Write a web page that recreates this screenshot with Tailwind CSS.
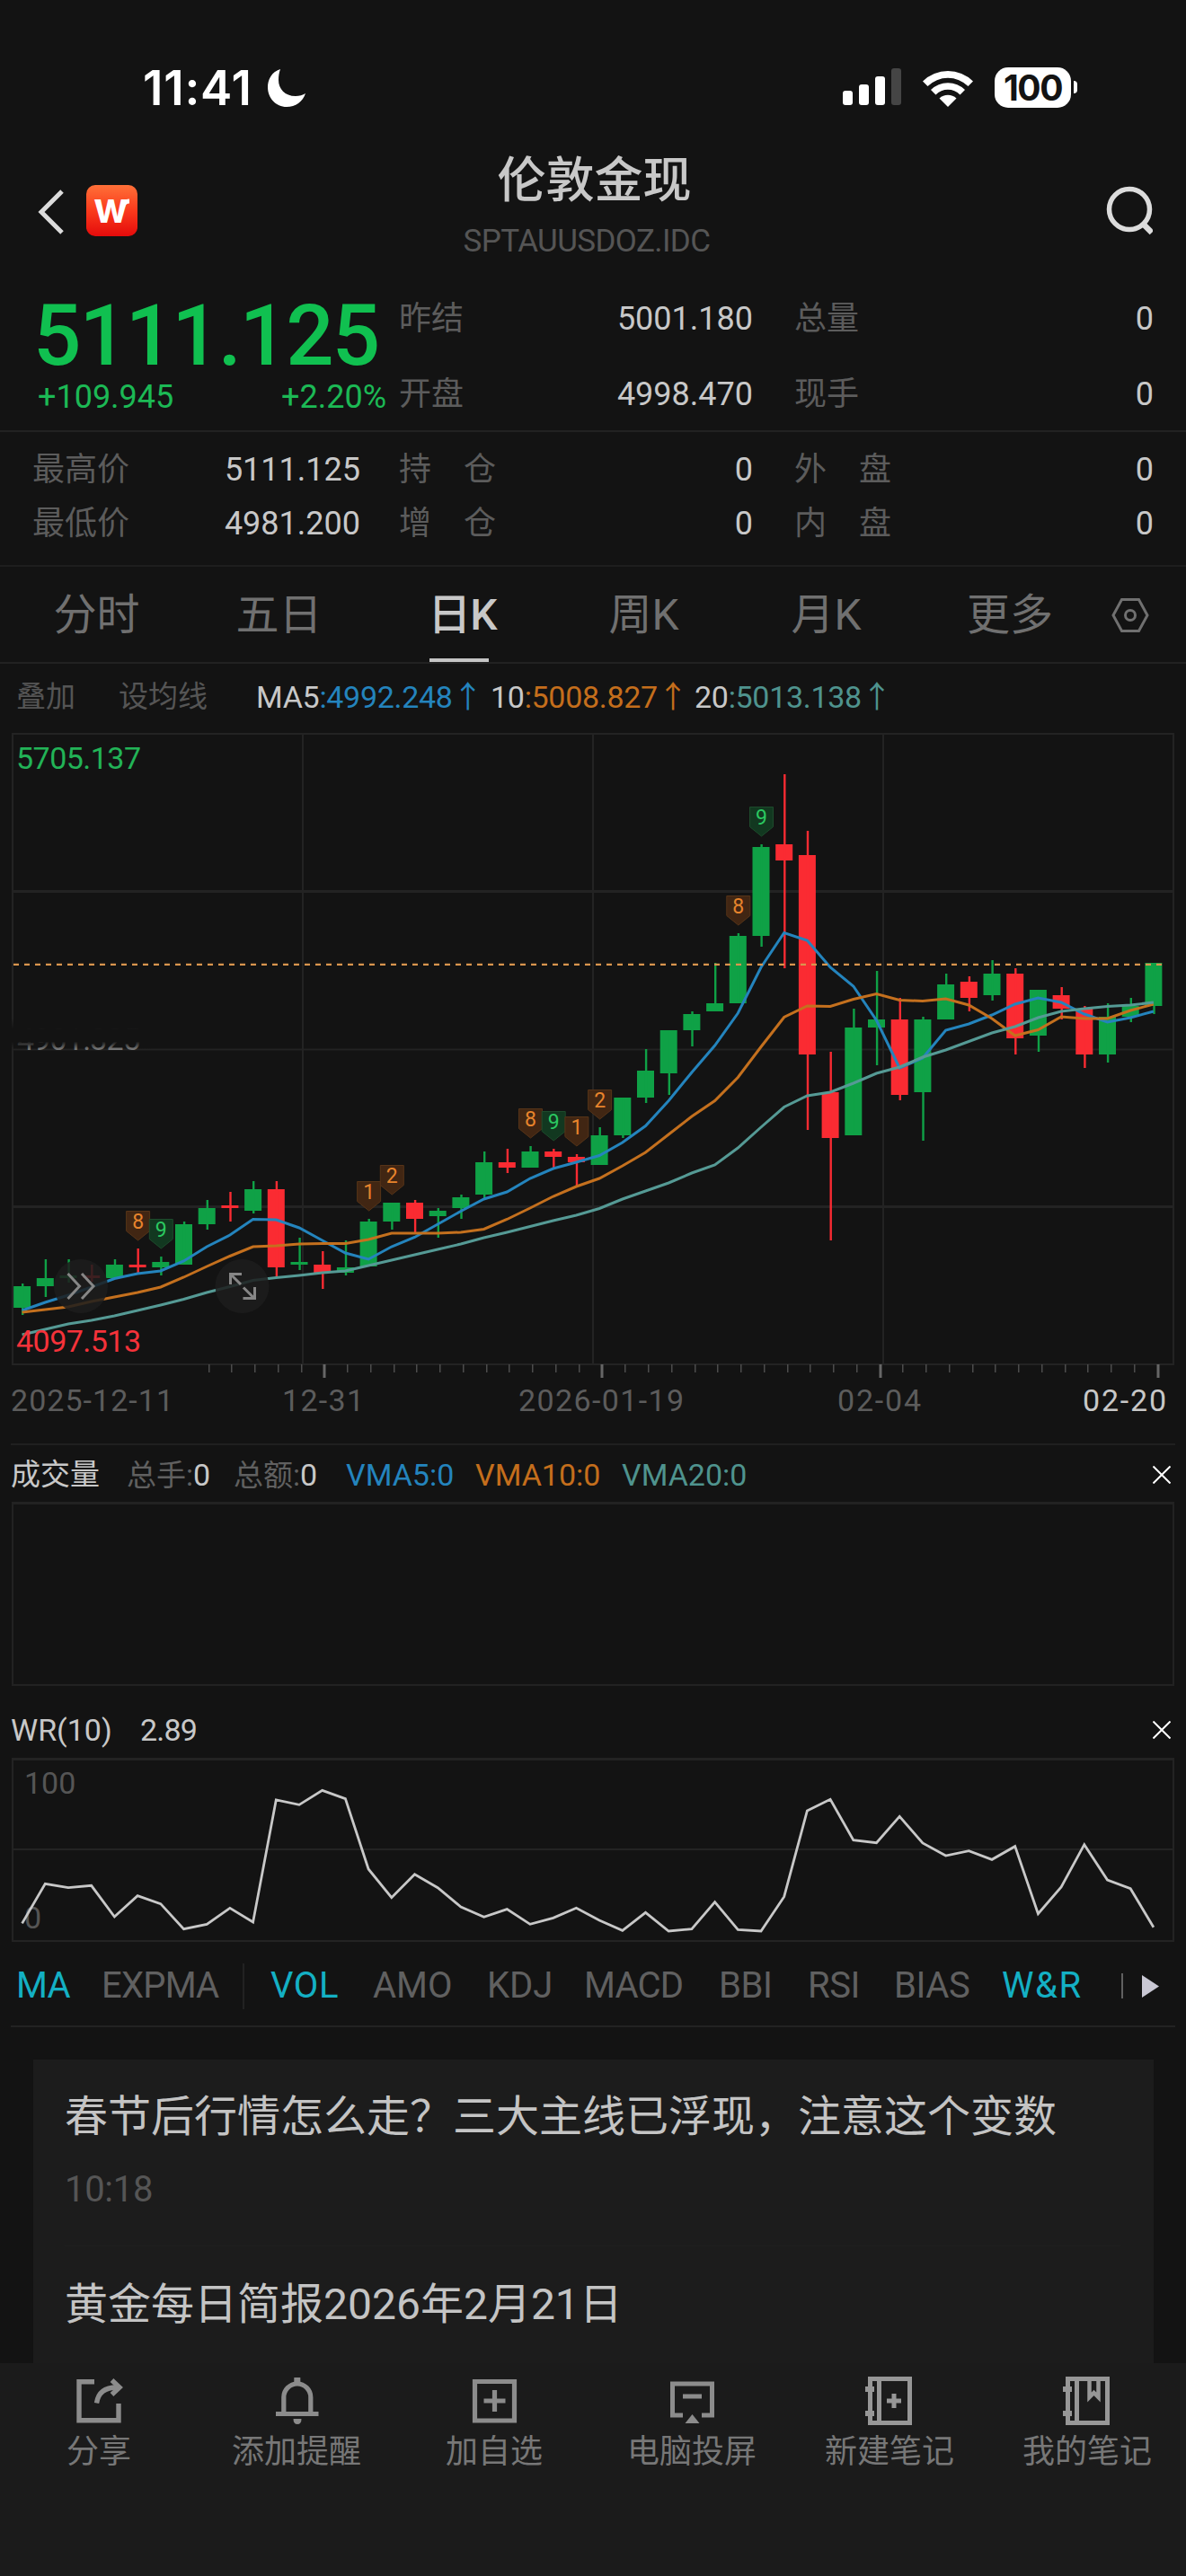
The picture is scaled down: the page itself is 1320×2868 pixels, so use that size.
<!DOCTYPE html>
<html lang="zh-CN">
<head>
    <meta charset="UTF-8">
    <meta name="viewport" content="width=device-width, initial-scale=1.0">
    <title>伦敦金现 SPTAUUSDOZ.IDC</title>
    <script src="https://cdn.jsdelivr.net/npm/@tailwindcss/browser@4"></script>
</head>
<body class="bg-[#131313]">
<div class="w-[1320px] h-[2868px] overflow-hidden flex flex-col bg-[#131313] text-[#c8c8c8] font-[Roboto,'Noto_Sans_CJK_SC',sans-serif] leading-none whitespace-nowrap">

    <!-- Status bar -->
    <div class="h-[150px] shrink-0 pt-[47px] pl-[159px] pr-[121px] flex items-start justify-between text-white">
        <div class="h-[102px] flex items-center">
            <span class="w-[138px] font-[Inter,sans-serif] font-semibold text-[53px] tracking-[0.8px]">11:41</span>
            <svg class="w-[44px] h-[44px]" viewBox="0 0 44 44"><path d="M15 1C5 4 1 13 1 21c0 12 9 22 21 22 10 0 18-6 21-15-3 2-7 3-11 3-12 0-19-8-19-18 0-4 .5-8 2-12Z" fill="#fff"/></svg>
        </div>
        <div class="h-[100px] flex items-center">
            <svg class="w-[66px] h-[42px] mr-[22px]" viewBox="0 0 66 42">
                <rect x="0" y="25" width="11" height="16" rx="3" fill="#fff"/>
                <rect x="18" y="18" width="11" height="23" rx="3" fill="#fff"/>
                <rect x="36" y="9" width="11" height="32" rx="3" fill="#fff"/>
                <rect x="54" y="0" width="11" height="41" rx="3" fill="#454545"/>
            </svg>
            <svg class="w-[58px] h-[43px] mr-[23px]" viewBox="0 0 58 43">
                <path d="M1 14.500 A40 40 0 0 1 57 14.500 L51.500 20 A32 32 0 0 0 6.500 20 Z" fill="#fff"/>
                <path d="M10 24 A27 27 0 0 1 48 24 L42.500 29.500 A19 19 0 0 0 15.500 29.500 Z" fill="#fff"/>
                <path d="M19.500 33.500 A14 14 0 0 1 38.500 33.500 L29 43 Z" fill="#fff"/>
            </svg>
            <div class="w-[85px] h-[45px] rounded-[15px] bg-white flex items-center justify-center text-[#131313] font-[Inter,sans-serif] font-bold text-[39px] tracking-[-1.5px]">100</div>
            <div class="w-[4px] h-[14px] ml-[3px] rounded-r-full bg-white"></div>
        </div>
    </div>

    <!-- Header -->
    <header class="h-[160px] shrink-0 px-[40px] flex items-start justify-between">
        <div class="w-[465px] pt-[56px] flex items-center">
            <svg class="w-[34px] h-[56px] mr-[22px]" viewBox="0 0 34 56"><path d="M29 6 6 29l23 23" fill="none" stroke="#dcdcdc" stroke-width="5"/></svg>
            <svg class="w-[57px] h-[57px]" viewBox="0 0 57 57">
                <defs><linearGradient id="logo" x1="0" y1="0" x2="0" y2="1"><stop offset="0" stop-color="#ff7038"/><stop offset=".5" stop-color="#fa3a1c"/><stop offset="1" stop-color="#e40b0b"/></linearGradient></defs>
                <rect width="57" height="57" rx="10" fill="url(#logo)"/>
                <text x="27.500" y="42" text-anchor="middle" textLength="38" lengthAdjust="spacingAndGlyphs" font-family="Inter" font-weight="700" font-size="48" fill="#fff">w</text>
                <path d="M41 20q2-4.500 7-4.500v5q-4 0-5 4z" fill="#fff"/>
            </svg>
        </div>
        <div class="w-[300px] pt-[24px] flex flex-col items-center">
            <h1 class="text-[54px] font-medium ml-[3px] pt-[1px]">伦敦金现</h1>
            <p class="mt-[22px] -ml-[14px] text-[35px] tracking-[-0.6px] text-[#555]">SPTAUUSDOZ.IDC</p>
        </div>
        <div class="w-[465px] pt-[55px] flex justify-end">
            <svg class="w-[56px] h-[62px] -mr-[3px]" viewBox="0 0 56 62"><circle cx="30" cy="28" r="22.500" fill="none" stroke="#dcdcdc" stroke-width="5.500"/><path d="m45 44 10 10" stroke="#dcdcdc" stroke-width="6.500"/></svg>
        </div>
    </header>

    <!-- Quote -->
    <section class="h-[171px] shrink-0 pl-[37px] grid grid-cols-[408px_439px_400px] border-b-2 border-[#222]">
        <div class="pt-[17px]">
            <div class="text-[94px] font-medium text-[#10c050] tracking-[-2px]">5111.125</div>
            <div class="mt-[3px] w-[393px] pl-[5px] flex justify-between text-[36px] text-[#1cb955]"><span>+109.945</span><span>+2.20%</span></div>
        </div>
        <div class="w-[393px] pt-[27px] flex flex-col gap-[48px] text-[36px]">
            <div class="flex justify-between"><span class="-ml-[1px] text-[#5c5c5c]">昨结</span><span>5001.180</span></div>
            <div class="flex justify-between"><span class="-ml-[1px] text-[#5c5c5c]">开盘</span><span>4998.470</span></div>
        </div>
        <div class="pt-[27px] flex flex-col gap-[48px] text-[36px]">
            <div class="flex justify-between"><span class="text-[#5c5c5c]">总量</span><span>0</span></div>
            <div class="flex justify-between"><span class="text-[#5c5c5c]">现手</span><span>0</span></div>
        </div>
    </section>
    <section class="h-[150px] shrink-0 pl-[37px] pt-[24px] grid grid-cols-[408px_439px_400px] grid-rows-[60px_60px] text-[36px] border-b-2 border-[#1e1e1e]">
        <div class="w-[364px] flex justify-between"><span class="-ml-[1px] text-[#5c5c5c]">最高价</span><span>5111.125</span></div>
        <div class="w-[393px] flex justify-between"><span class="-ml-[1px] text-[#5c5c5c]">持　仓</span><span>0</span></div>
        <div class="flex justify-between"><span class="text-[#5c5c5c]">外　盘</span><span>0</span></div>
        <div class="w-[364px] flex justify-between"><span class="-ml-[1px] text-[#5c5c5c]">最低价</span><span>4981.200</span></div>
        <div class="w-[393px] flex justify-between"><span class="-ml-[1px] text-[#5c5c5c]">增　仓</span><span>0</span></div>
        <div class="flex justify-between"><span class="text-[#5c5c5c]">内　盘</span><span>0</span></div>
    </section>

    <!-- Period tabs -->
    <nav class="h-[108px] shrink-0 pl-[6px] pt-[2px] flex items-center text-[48px] text-[#707070] border-b-2 border-[#222]">
        <div class="w-[203px] text-center">分时</div>
        <div class="w-[203px] text-center">五日</div>
        <div class="relative w-[203px] h-full pl-[2px] flex items-center justify-center text-[#c8c8c8] font-medium tracking-[-1px]">日K
            <div class="absolute left-[66px] bottom-0 w-[66px] h-[4px] bg-[#c4c4c4]"></div>
        </div>
        <div class="w-[203px] text-center">周K</div>
        <div class="w-[203px] text-center">月K</div>
        <div class="w-[203px] pl-[3px] text-center">更多</div>
        <svg class="ml-[13px] w-[42px] h-[40px]" viewBox="0 0 42 40" fill="none" stroke="#707070" stroke-width="3"><path d="M11.500 2.500h19L40 20l-9.500 17.500h-19L2 20Z"/><circle cx="21" cy="20" r="5.500"/></svg>
    </nav>

    <!-- MA legend -->
    <div class="h-[72px] shrink-0 pl-[18px] pt-[1px] flex items-center text-[34px]">
        <span class="w-[114px] text-[33px] text-[#555]">叠加</span>
        <span class="w-[153px] text-[33px] text-[#555]">设均线</span>
        <span class="w-[261px] tracking-[-0.3px]">MA5<span class="text-[#2484bd]">:4992.248↑</span></span>
        <span class="w-[227px] tracking-[-0.3px]">10<span class="text-[#c46e1c]">:5008.827↑</span></span>
        <span class="tracking-[-0.3px]">20<span class="text-[#4f938e]">:5013.138↑</span></span>
    </div>

    <!-- Candles, y axis of the viewBox starts at the top of this block -->
    <svg id="kline" class="w-[1320px] h-[796px] shrink-0" viewBox="0 811 1320 796" font-family="Roboto" font-size="34"></svg>

    <!-- Volume -->
    <section class="shrink-0 h-[270px] mx-[12px] border-t-2 border-[#202020]">
        <div class="h-[63px] pt-[2px] flex items-center text-[34px]">
            <span class="w-[129px] text-[33px]">成交量</span>
            <span class="w-[119px]"><span class="text-[33px] text-[#606060]">总手:</span>0</span>
            <span class="w-[125px]"><span class="text-[33px] text-[#606060]">总额:</span>0</span>
            <span class="w-[144px] text-[#2484bd]">VMA5:0</span>
            <span class="w-[163px] text-[#c46e1c]">VMA10:0</span>
            <span class="text-[#4f938e]">VMA20:0</span>
            <svg class="ml-auto mr-[5px] w-[20px] h-[20px]" viewBox="0 0 20 20"><path d="m.5.500 19 19m0-19-19 19" stroke="#fff" stroke-width="2"/></svg>
        </div>
        <div class="ml-[1px] mr-[1px] h-[205px] border-2 border-t-3 border-[#222]"></div>
    </section>

    <!-- Williams %R -->
    <section class="shrink-0 h-[286px] mx-[12px] pt-[17px]">
        <div class="h-[63px] flex items-center text-[34px]">
            <span class="w-[144px]">WR(10)</span>
            <span class="tracking-[-0.8px]">2.89</span>
            <svg class="ml-auto mr-[5px] w-[20px] h-[20px]" viewBox="0 0 20 20"><path d="m.5.500 19 19m0-19-19 19" stroke="#fff" stroke-width="2"/></svg>
        </div>
        <svg id="wr" class="w-[1296px] h-[205px]" viewBox="12 1957 1296 205" font-family="Roboto" font-size="34"></svg>
    </section>

    <!-- Indicator picker -->
    <div class="h-[94px] shrink-0 mx-[12px] pl-[6px] pt-[4px] flex items-center text-[40px] text-[#606060] border-b-2 border-[#222]">
        <span class="w-[95px] tracking-[-0.8px] text-[#14b0c4]">MA</span>
        <span class="w-[157px] tracking-[-0.8px]">EXPMA</span>
        <span class="w-[2px] h-[51px] mr-[29px] bg-[#222]"></span>
        <span class="w-[114px] tracking-[0.6px] text-[#14b0c4]">VOL</span>
        <span class="w-[127px]">AMO</span>
        <span class="w-[108px]">KDJ</span>
        <span class="w-[150px] tracking-[-0.8px]">MACD</span>
        <span class="w-[99px] tracking-[-0.4px]">BBI</span>
        <span class="w-[96px] tracking-[-0.4px]">RSI</span>
        <span class="w-[120px] tracking-[-0.4px]">BIAS</span>
        <span class="w-[133px] tracking-[1.6px] text-[#14b0c4]">W&amp;R</span>
        <span class="w-[2px] h-[28px] mr-[21px] bg-[#606060]"></span>
        <svg class="w-[20px] h-[25px]" viewBox="0 0 20 25"><path d="M0 0 19 12.500 0 25Z" fill="#c9c8d4"/></svg>
    </div>

    <!-- News -->
    <div class="h-[374px] shrink-0 pt-[36px] pl-[37px] pr-[36px]">
        <div class="h-[338px] pl-[35px] pr-[37px] bg-[#1c1c1c] text-[48px] text-[#c4c4c4]">
            <div class="h-[208px] pt-[40px] border-b border-[#1f1f1f]">
                <p>春节后行情怎么走？三大主线已浮现，注意这个变数</p>
                <p class="mt-[37px] text-[40px] tracking-[-0.3px] text-[#555]">10:18</p>
            </div>
            <p class="pt-[41px]">黄金每日简报2026年2月21日</p>
        </div>
    </div>

    <!-- Bottom toolbar -->
    <footer class="h-[237px] shrink-0 pt-[12px] grid grid-cols-6 bg-[#1b1b1b] text-[36px] text-[#777] text-center">
        <div><svg class="mx-auto mb-[9px] w-[60px] h-[60px]" viewBox="0 0 60 60" fill="none" stroke="#8c8c8c" stroke-width="5.400"><path d="M25 8.800H8v43h44V33"/><path d="M27.500 32.500Q30 15 50 15"/><path d="m44.500 7 8.500 8-8.500 8"/></svg>分享</div>
        <div><svg class="mx-auto mb-[9px] w-[60px] h-[60px]" viewBox="0 0 60 60" fill="none" stroke="#8c8c8c" stroke-width="5.200"><path d="M15.800 44V26a15 15 0 0 1 30 0v18M7 44.500h47.500"/><path d="M30.800 4v6" stroke-width="7"/><path d="M26.500 50h9q0 6-4.500 6t-4.500-6Z" fill="#8c8c8c" stroke="none"/></svg>添加提醒</div>
        <div><svg class="mx-auto mb-[9px] w-[60px] h-[60px]" viewBox="0 0 60 60" fill="none" stroke="#8c8c8c" stroke-width="5.200"><path d="M8.500 8.500h44v43.500h-44ZM18.500 30h24M30.500 18v24"/></svg>加自选</div>
        <div><svg class="mx-auto mb-[9px] w-[60px] h-[60px]" viewBox="0 0 60 60" fill="none" stroke="#8c8c8c" stroke-width="5"><path d="M20 46H8.500V11h44v35H41M20 25h21"/><path d="m30.500 45 8 10h-16Z" fill="#8c8c8c" stroke="none"/></svg>电脑投屏</div>
        <div><svg class="mx-auto mb-[9px] w-[60px] h-[60px]" viewBox="0 0 60 60" fill="none" stroke="#979797" stroke-width="5"><path d="M8.500 5.500h44v49h-44ZM18.500 5v50"/><path d="M3 17h10M3 44h10" stroke-width="6"/><path d="M27 30h16M35 22v16"/></svg>新建笔记</div>
        <div><svg class="mx-auto mb-[9px] w-[60px] h-[60px]" viewBox="0 0 60 60" fill="none" stroke="#979797" stroke-width="5"><path d="M8.500 5.500h44v49h-44ZM18.500 5v50"/><path d="M3 17h10M3 44h10" stroke-width="6"/><path d="M32.500 6v20l5-5 5 5V6" stroke-width="4.500"/></svg>我的笔记</div>
    </footer>
</div>

<script>
    const STEP = 25.7;
    const UP = '#0fa146';
    const DOWN = '#fa2b32';
    const cx = i => 24.6 + i * STEP;

    // [up, high, bodyTop, bodyBottom, low]
    const candles = [
        [1,1429,1432,1456,1464],[1,1402,1423,1432,1444],[1,1402,1420,1423,1428],[0,1408,1420,1423,1427],[1,1402,1408,1423,1423],
        [0,1390,1408,1411,1417],[1,1399,1405,1411,1420],[1,1360,1363,1408,1408],[1,1336,1345,1363,1369],[0,1327,1342,1345,1360],
        [1,1315,1324,1348,1351],[0,1315,1324,1411,1422],[1,1378,1405,1408,1414],[0,1393,1408,1417,1435],[1,1381,1411,1417,1420],
        [1,1357,1360,1410,1410],[1,1339,1339,1360,1369],[0,1336,1339,1357,1372],[1,1345,1348,1354,1378],[1,1330,1333,1345,1357],
        [1,1282,1294,1330,1335],[0,1279,1294,1300,1306],[1,1276,1282,1300,1300],[0,1279,1282,1288,1300],[0,1285,1288,1294,1321],
        [1,1255,1264,1297,1297],[1,1222,1222,1264,1267],[1,1168,1192,1222,1228],[1,1147,1147,1195,1219],[1,1126,1129,1147,1165],
        [1,1072,1117,1126,1126],[1,1039,1042,1117,1117],[1,940,943,1042,1054],[0,862,940,958,1078],[0,925,952,1174,1258],
        [0,1171,1216,1267,1381],[1,1123,1144,1264,1264],[1,1081,1135,1144,1186],[0,1111,1135,1219,1225],[1,1132,1135,1216,1270],
        [1,1084,1096,1135,1135],[0,1087,1093,1111,1126],[1,1069,1084,1108,1114],[0,1078,1084,1156,1174],[1,1102,1102,1153,1171],
        [0,1099,1108,1123,1135],[0,1120,1123,1174,1189],[1,1117,1132,1174,1183],[1,1111,1120,1132,1138],[1,1072,1072,1120,1129]
    ];
    const ma5 = [1459,1450,1442,1433,1423.5,1418,1415,1404,1388,1375,1357.5,1358,1367,1381,1395,1402,1388,1377.5,1363,1348.5,1335,1327,1312,1301,1294,1286.5,1272,1253.5,1225.5,1194,1164,1128,1077,1038.5,1047,1077,1098,1136,1189,1178,1147,1140,1130,1118,1111,1116,1129,1138,1133,1126];
    const ma10 = [1461,1458,1455,1449,1444,1439,1433,1422,1410,1398.5,1388,1387,1385,1384.5,1384.5,1380,1373,1373,1373,1372,1368.5,1357.5,1345,1332,1321,1312,1298,1283,1263,1243,1225.5,1199.5,1165.5,1132.5,1120,1120.5,1112.5,1106.5,1113.5,1114.5,1112,1119,1134,1153,1146.5,1132,1134,1134,1125,1118];
    const ma20 = [1486,1480,1474,1470,1465,1459,1453,1446.5,1439,1432.5,1425.5,1422.5,1420,1417,1415,1409,1403,1397,1391,1385,1378,1372,1365.5,1359,1353,1345.5,1335,1326,1317,1306,1297,1278,1255,1232.5,1220,1216,1206,1195,1188,1177,1169,1159.5,1150,1143,1133,1126,1123,1120.5,1119,1116];
    // candle index -> TD count
    const marks = { 5: 8, 6: 9, 15: 1, 16: 2, 22: 8, 23: 9, 24: 1, 25: 2, 31: 8, 32: 9 };

    const line = (data, color, w) =>
        `<polyline points="${data.map((y, i) => cx(i).toFixed(1) + ',' + y).join(' ')}" fill="none" stroke="${color}" stroke-width="${w}"/>`;

    let s = '<defs><linearGradient id="fade" x1="0" y1="0" x2="0" y2="1"><stop offset="0" stop-color="#131313" stop-opacity="0"/><stop offset=".35" stop-color="#131313"/><stop offset=".75" stop-color="#131313"/><stop offset="1" stop-color="#131313" stop-opacity="0"/></linearGradient></defs>';

    // grid
    s += '<g fill="none" stroke="#232323" stroke-width="2"><path d="M14 817H1306V1519H14Z"/><path d="M14 1168.500H1306"/><path d="M14 992.500H1306M14 1343.500H1306" stroke-width="3"/><path d="M337 817V1519M660 817V1519M983 817V1519"/></g>';
    s += '<text x="19" y="1169" fill="#777" textLength="137">4901.325</text>';
    s += '<rect x="8" y="1134" width="160" height="34" fill="url(#fade)"/>';

    candles.forEach(([up, h, t, b, l], i) => {
        const c = up ? UP : DOWN;
        s += `<rect x="${(cx(i) - 9.5).toFixed(1)}" y="${t}" width="19" height="${b - t}" fill="${c}"/>`;
        s += `<rect x="${(cx(i) - 0.6).toFixed(1)}" y="${h}" width="2.4" height="${l - h}" fill="${c}"/>`;
    });
    s += line(ma5, '#2484bd', 3) + line(ma10, '#c4701e', 3) + line(ma20, '#559a95', 3);
    s += '<path d="M15 1073.800H1294" stroke="#d9954e" stroke-width="2.200" stroke-dasharray="6 6"/>';

    for (const i in marks) {
        const x = cx(+i) + 0.5, y = candles[i][1] - 42, nine = marks[i] === 9;
        s += `<path d="M${x - 13} ${y + .5}h26v22l-13 10.500l-13-10.500z" fill="${nine ? '#123820' : '#412613'}" stroke="${nine ? '#1d4b2c' : '#563418'}"/>`;
        s += `<text x="${x}" y="${y + 20}" font-size="23" text-anchor="middle" fill="${nine ? '#2bc860' : '#e8842c'}">${marks[i]}</text>`;
    }

    s += '<text x="18" y="856" fill="#22b357" textLength="139">5705.137</text>';
    s += '<text x="18" y="1505" fill="#f5323a" textLength="139">4097.513</text>';

    // floating buttons
    s += '<circle cx="90" cy="1432" r="30" fill="#1d1d1d" fill-opacity=".86"/><circle cx="269.500" cy="1432" r="30" fill="#1d1d1d" fill-opacity=".86"/>';
    s += '<g fill="none" stroke="#868686" stroke-width="3"><path d="m75.500 1418 13 14-13 14M91 1418l13 14-13 14"/><path d="M268 1430l-11-11M256.500 1430v-11.500h12.500M271 1433.500l12 12M283.500 1433v12.500h-13"/></g>';

    // time axis
    for (let k = 0; k <= 41; k++) {
        const x = Math.round(1288.700 - k * 25.760);
        const major = k % 12 === 0;
        s += `<rect x="${major ? x - 1.5 : x - 1}" y="1519" width="${major ? 3 : 1.5}" height="${major ? 15 : 9}" fill="${major ? '#666' : '#4c4c4c'}"/>`;
    }
    [['2025-12-11', 12, 181, '#5c5c5c'], ['12-31', 314, 91, '#5c5c5c'], ['2026-01-19', 577, 184, '#5c5c5c'], ['02-04', 932, 93, '#5c5c5c'], ['02-20', 1205, 93, '#c8c8c8']]
        .forEach(([t, x, w, c]) => { s += `<text x="${x}" y="1571" textLength="${w}" fill="${c}">${t}</text>`; });
    document.getElementById('kline').innerHTML = s;

    // WR
    const wr = [724,592,605,598,702,632,659,743,727,673,720,312,328,280,308,543,638,560,605,669,703,677,727,706,673,714,748,688,750,743,653,745,750,635,348,310,446,455,367,456,498,482,511,467,692,603,461,579,608,737].map(v => 1900 + v / 3);
    document.getElementById('wr').innerHTML =
        '<g fill="none" stroke="#232323" stroke-width="2"><path d="M14 1958.500V2161H1306V1958.500M14 2059H1306"/><path d="M13 1958.500H1307" stroke-width="3"/></g>' +
        '<text x="27" y="1997" fill="#555">100</text><text x="27" y="2147" fill="#555">0</text>' + line(wr, '#c8c8c8', 2.8);
</script>
</body>
</html>
